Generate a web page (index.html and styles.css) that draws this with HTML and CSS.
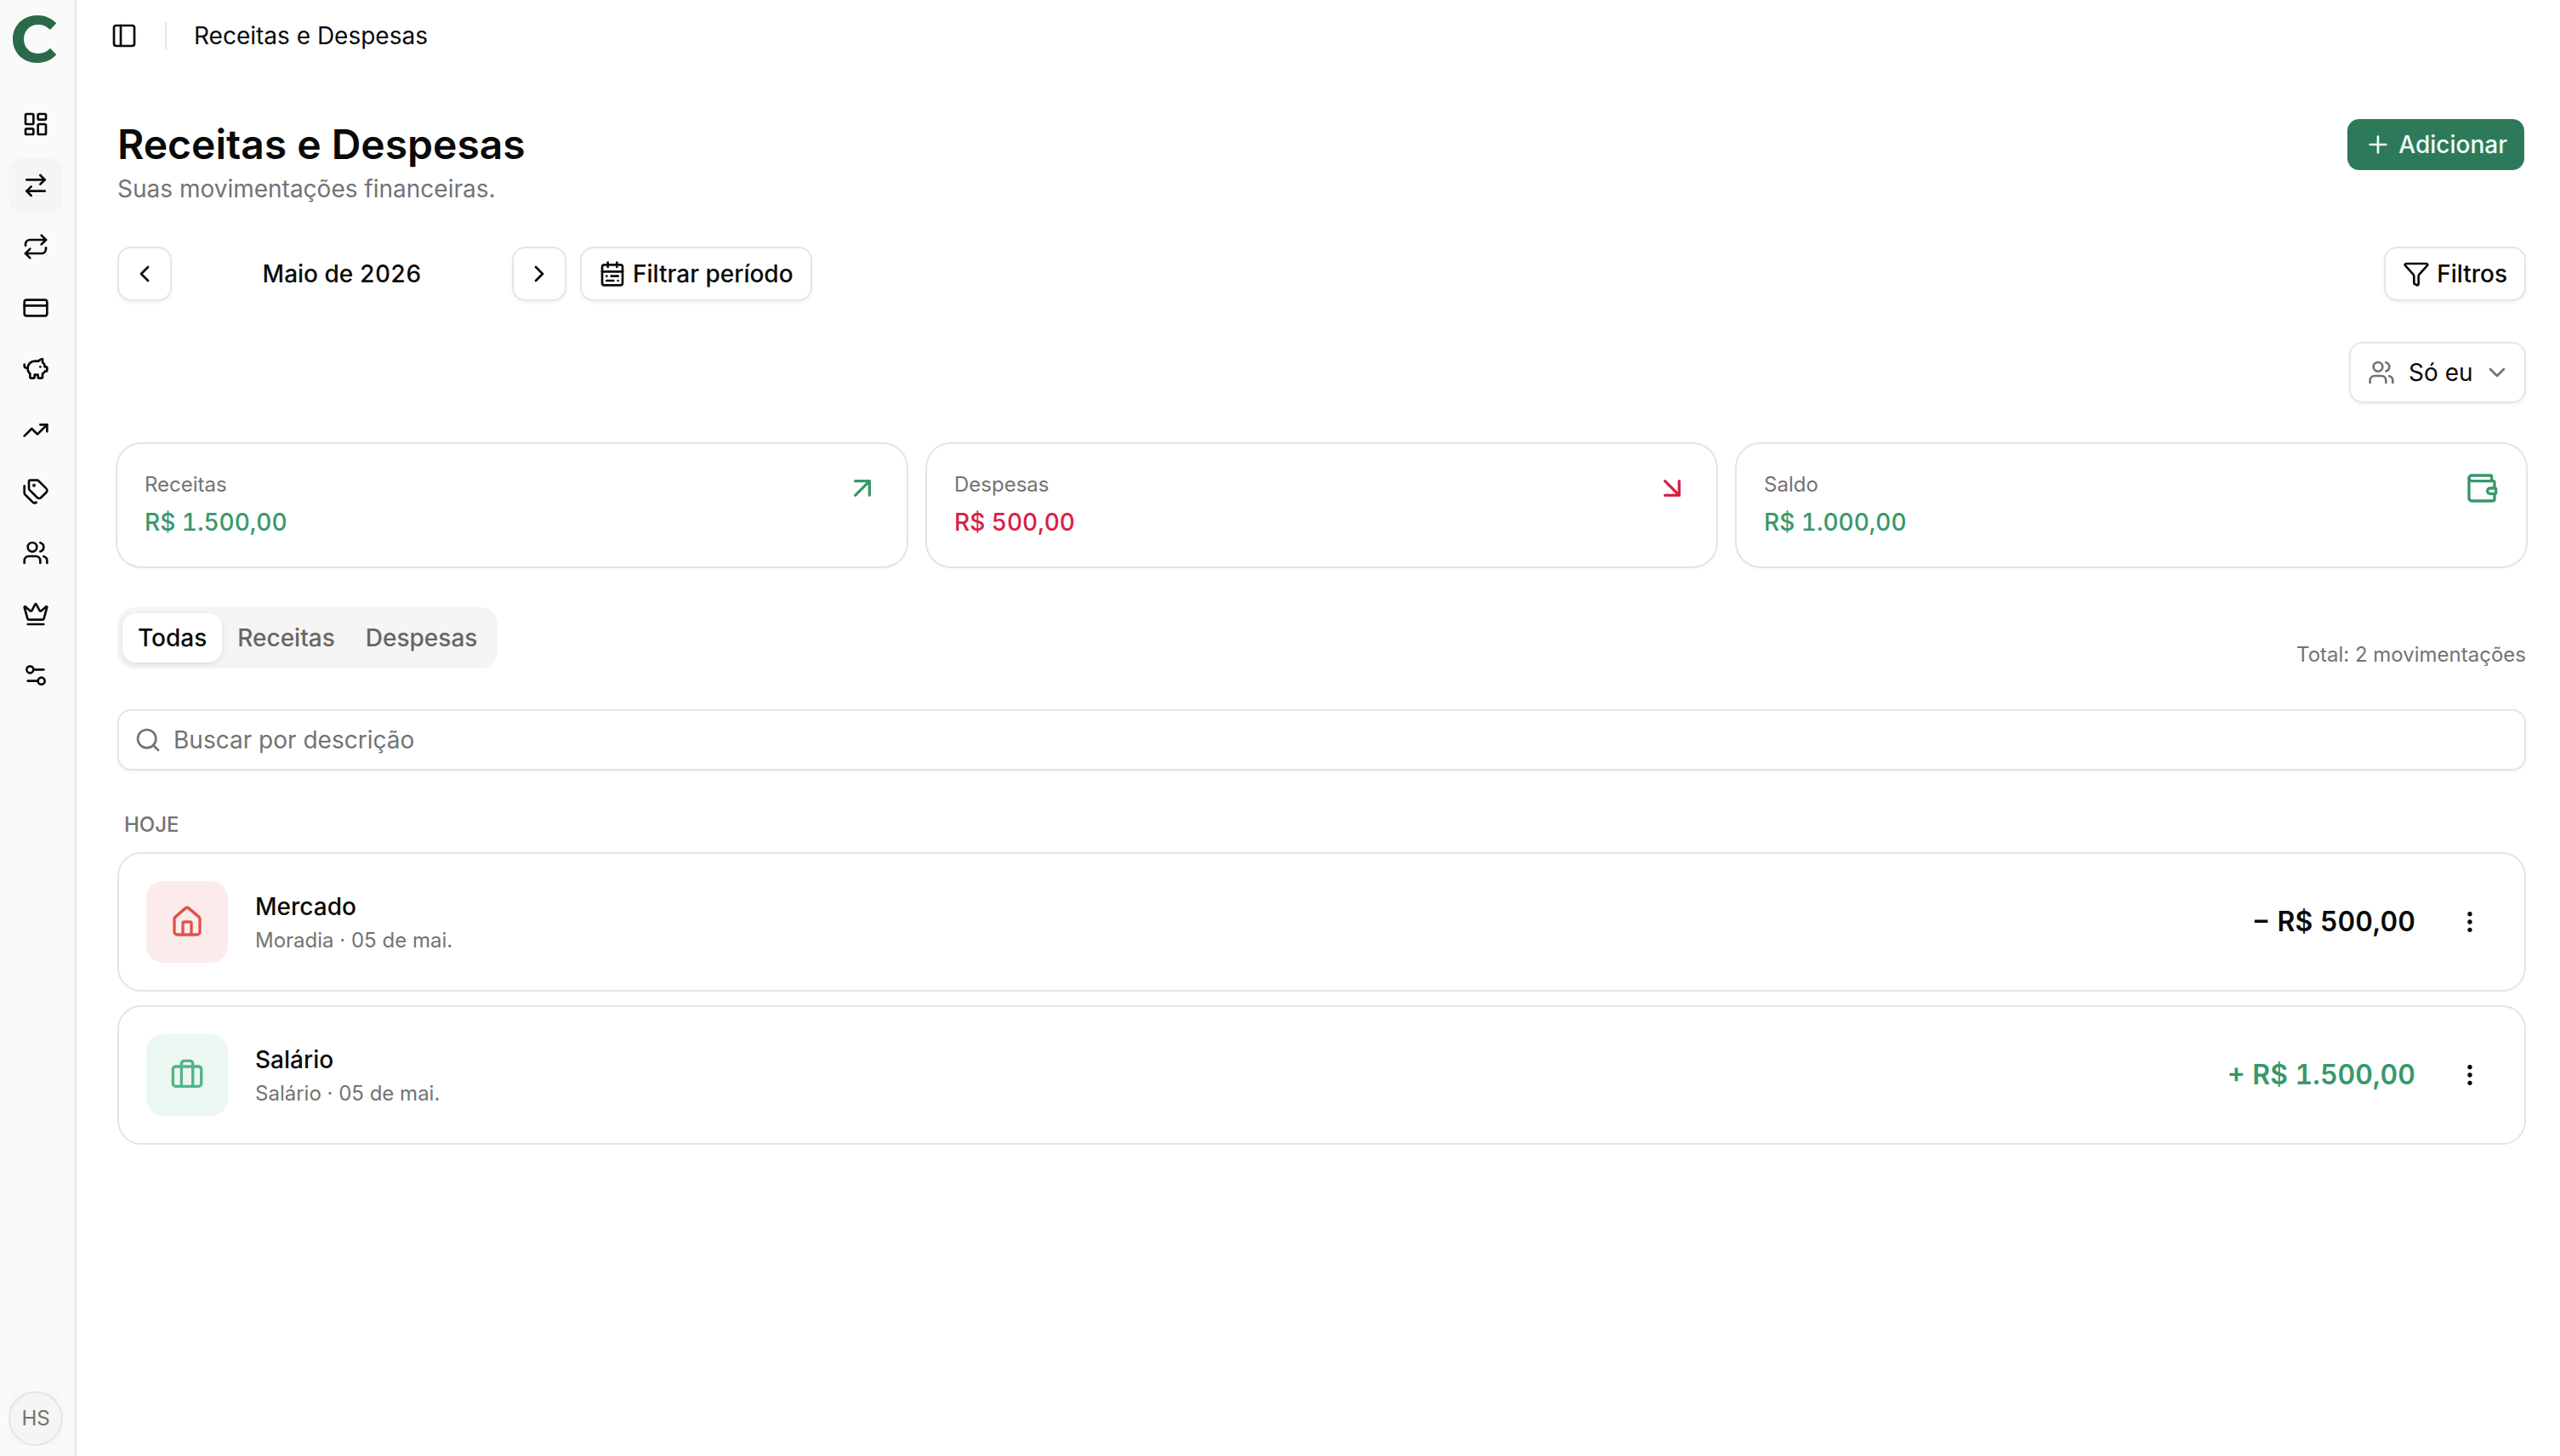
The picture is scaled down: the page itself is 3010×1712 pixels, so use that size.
FILE: index.html
```html
<!DOCTYPE html>
<html lang="pt-BR">
<head>
    <meta charset="UTF-8">
    <meta name="viewport" content="width=device-width, initial-scale=1.0">
    <title>Receitas e Despesas</title>
    <link rel="stylesheet" href="styles.css">
</head>
<body>
    <div class="app">
        <aside class="sidebar">
            <a href="#" class="logo" aria-label="Início">
                <svg viewBox="0 0 54 56"><path d="M52.3 9.3C46.5 3.3 38.6 0 30 0 13.2 0 1 12.2 1 28s12.2 28 29 28c8.6 0 16.5-3.3 22.3-9.7L45 38.7c-4 4.2-8.6 6.2-14.5 6.2C21 44.9 14 37.8 14 28s7-17.1 16.5-17.1c5.9 0 10.5 1.9 14.5 6.1z"/></svg>
            </a>
            <nav class="nav">
                <a href="#" class="nav-item" aria-label="Painel">
                    <svg class="icon" viewBox="0 0 24 24"><rect width="7" height="9" x="3" y="3" rx="1"/><rect width="7" height="5" x="14" y="3" rx="1"/><rect width="7" height="9" x="14" y="12" rx="1"/><rect width="7" height="5" x="3" y="16" rx="1"/></svg>
                </a>
                <a href="#" class="nav-item active" aria-label="Receitas e Despesas">
                    <svg class="icon" viewBox="0 0 24 24"><path d="m16 3 4 4-4 4"/><path d="M20 7H4"/><path d="m8 21-4-4 4-4"/><path d="M4 17h16"/></svg>
                </a>
                <a href="#" class="nav-item" aria-label="Recorrentes">
                    <svg class="icon" viewBox="0 0 24 24"><path d="m17 2 4 4-4 4"/><path d="M3 11v-1a4 4 0 0 1 4-4h14"/><path d="m7 22-4-4 4-4"/><path d="M21 13v1a4 4 0 0 1-4 4H3"/></svg>
                </a>
                <a href="#" class="nav-item" aria-label="Cartões">
                    <svg class="icon" viewBox="0 0 24 24"><rect width="20" height="14" x="2" y="5" rx="2"/><path d="M2 10h20"/></svg>
                </a>
                <a href="#" class="nav-item" aria-label="Cofrinhos">
                    <svg class="icon" viewBox="0 0 24 24"><path d="M11 17h3v2a1 1 0 0 0 1 1h2a1 1 0 0 0 1-1v-3a3.16 3.16 0 0 0 2-2h1a1 1 0 0 0 1-1v-2a1 1 0 0 0-1-1h-1a5 5 0 0 0-2-4V3a4 4 0 0 0-3.2 1.6l-.3.4H11a6 6 0 0 0-6 6v1a5 5 0 0 0 2 4v3a1 1 0 0 0 1 1h2a1 1 0 0 0 1-1z"/><path d="M16 10h.01"/><path d="M2 8v1a2 2 0 0 0 2 2h1"/></svg>
                </a>
                <a href="#" class="nav-item" aria-label="Investimentos">
                    <svg class="icon" viewBox="0 0 24 24"><path d="M16 7h6v6"/><path d="m22 7-8.5 8.5-5-5L2 17"/></svg>
                </a>
                <a href="#" class="nav-item" aria-label="Categorias">
                    <svg class="icon" viewBox="0 0 24 24"><path d="M13.172 2a2 2 0 0 1 1.414.586l6.71 6.71a2.4 2.4 0 0 1 0 3.408l-4.592 4.592a2.4 2.4 0 0 1-3.408 0l-6.71-6.71A2 2 0 0 1 6 9.172V3a1 1 0 0 1 1-1z"/><path d="M2 7v6.172a2 2 0 0 0 .586 1.414l6.71 6.71a2.4 2.4 0 0 0 3.191.193"/><circle cx="10.5" cy="6.5" r=".5" fill="currentColor"/></svg>
                </a>
                <a href="#" class="nav-item" aria-label="Grupo">
                    <svg class="icon" viewBox="0 0 24 24"><path d="M16 21v-2a4 4 0 0 0-4-4H6a4 4 0 0 0-4 4v2"/><path d="M16 3.128a4 4 0 0 1 0 7.744"/><path d="M22 21v-2a4 4 0 0 0-3-3.87"/><circle cx="9" cy="7" r="4"/></svg>
                </a>
                <a href="#" class="nav-item" aria-label="Assinatura">
                    <svg class="icon" viewBox="0 0 24 24"><path d="M11.562 3.266a.5.5 0 0 1 .876 0L15.39 8.87a1 1 0 0 0 1.516.294L21.183 5.5a.5.5 0 0 1 .798.519l-2.834 10.246a1 1 0 0 1-.956.734H5.81a1 1 0 0 1-.957-.734L2.02 6.02a.5.5 0 0 1 .798-.519l4.276 3.664a1 1 0 0 0 1.516-.294z"/><path d="M5 21h14"/></svg>
                </a>
                <a href="#" class="nav-item" aria-label="Configurações">
                    <svg class="icon" viewBox="0 0 24 24"><path d="M14 17H5"/><path d="M19 7h-9"/><circle cx="17" cy="17" r="3"/><circle cx="7" cy="7" r="3"/></svg>
                </a>
            </nav>
            <button type="button" class="user" aria-label="Conta"><span class="avatar">HS</span></button>
        </aside>

        <div class="page">
            <header class="topbar">
                <button type="button" class="toggle" aria-label="Alternar menu">
                    <svg class="icon" viewBox="0 0 24 24"><rect width="18" height="18" x="3" y="3" rx="2"/><path d="M9 3v18"/></svg>
                </button>
                <span class="divider"></span>
                <span class="crumb">Receitas e Despesas</span>
            </header>

            <main class="content">
                <div class="row heading">
                    <div>
                        <h1>Receitas e Despesas</h1>
                        <p class="subtitle">Suas movimentações financeiras.</p>
                    </div>
                    <button type="button" class="btn primary">
                        <svg class="icon" viewBox="0 0 24 24"><path d="M5 12h14"/><path d="M12 5v14"/></svg>
                        Adicionar
                    </button>
                </div>

                <div class="row">
                    <div class="period">
                        <button type="button" class="btn square" aria-label="Mês anterior">
                            <svg class="icon" viewBox="0 0 24 24"><path d="m15 18-6-6 6-6"/></svg>
                        </button>
                        <span class="month">Maio de 2026</span>
                        <button type="button" class="btn square" aria-label="Próximo mês">
                            <svg class="icon" viewBox="0 0 24 24"><path d="m9 18 6-6-6-6"/></svg>
                        </button>
                        <button type="button" class="btn">
                            <svg class="icon" viewBox="0 0 24 24"><rect width="18" height="18" x="3" y="4" rx="2"/><path d="M16 2v4"/><path d="M3 10h18"/><path d="M8 2v4"/><path d="M17 14h-6"/><path d="M13 18H7"/><path d="M7 14h.01"/><path d="M17 18h.01"/></svg>
                            Filtrar período
                        </button>
                    </div>
                    <button type="button" class="btn">
                        <svg class="icon" viewBox="0 0 24 24"><path d="M10 20a1 1 0 0 0 .553.895l2 1A1 1 0 0 0 14 21v-7a2 2 0 0 1 .517-1.341L21.74 4.67A1 1 0 0 0 21 3H3a1 1 0 0 0-.742 1.67l7.225 7.989A2 2 0 0 1 10 14z"/></svg>
                        Filtros
                    </button>
                </div>

                <div class="scope">
                    <label class="select-box">
                        <svg class="icon" viewBox="0 0 24 24"><path d="M16 21v-2a4 4 0 0 0-4-4H6a4 4 0 0 0-4 4v2"/><path d="M16 3.128a4 4 0 0 1 0 7.744"/><path d="M22 21v-2a4 4 0 0 0-3-3.87"/><circle cx="9" cy="7" r="4"/></svg>
                        <select aria-label="Visualização">
                            <option>Só eu</option>
                        </select>
                        <svg class="icon" viewBox="0 0 24 24"><path d="m6 9 6 6 6-6"/></svg>
                    </label>
                </div>

                <section class="stats">
                    <div class="stat-card">
                        <div>
                            <p class="stat-label">Receitas</p>
                            <p class="stat-value income">R$ 1.500,00</p>
                        </div>
                        <svg class="icon large income" viewBox="0 0 24 24"><path d="M7 7h10v10"/><path d="M7 17 17 7"/></svg>
                    </div>
                    <div class="stat-card">
                        <div>
                            <p class="stat-label">Despesas</p>
                            <p class="stat-value expense">R$ 500,00</p>
                        </div>
                        <svg class="icon large expense" viewBox="0 0 24 24"><path d="m7 7 10 10"/><path d="M17 7v10H7"/></svg>
                    </div>
                    <div class="stat-card">
                        <div>
                            <p class="stat-label">Saldo</p>
                            <p class="stat-value income">R$ 1.000,00</p>
                        </div>
                        <svg class="icon large income" viewBox="0 0 24 24"><path d="M19 7V4a1 1 0 0 0-1-1H5a2 2 0 0 0 0 4h15a1 1 0 0 1 1 1v4h-3a2 2 0 0 0 0 4h3a1 1 0 0 0 1-1v-2a1 1 0 0 0-1-1"/><path d="M3 5v14a2 2 0 0 0 2 2h15a1 1 0 0 0 1-1v-4"/></svg>
                    </div>
                </section>

                <div class="row list-head">
                    <div class="tabs" role="tablist">
                        <button type="button" class="tab active" role="tab" aria-selected="true">Todas</button>
                        <button type="button" class="tab" role="tab" aria-selected="false">Receitas</button>
                        <button type="button" class="tab" role="tab" aria-selected="false">Despesas</button>
                    </div>
                    <p class="total">Total: 2 movimentações</p>
                </div>

                <label class="search">
                    <svg class="icon" viewBox="0 0 24 24"><path d="m21 21-4.34-4.34"/><circle cx="11" cy="11" r="8"/></svg>
                    <input type="search" placeholder="Buscar por descrição" aria-label="Buscar por descrição">
                </label>

                <section class="day">
                    <h2>HOJE</h2>
                    <article class="entry">
                        <span class="tile red">
                            <svg class="icon large" viewBox="0 0 24 24"><path d="M15 21v-8a1 1 0 0 0-1-1h-4a1 1 0 0 0-1 1v8"/><path d="M3 10a2 2 0 0 1 .709-1.528l7-6a2 2 0 0 1 2.582 0l7 6A2 2 0 0 1 21 10v9a2 2 0 0 1-2 2H5a2 2 0 0 1-2-2z"/></svg>
                        </span>
                        <div class="entry-info">
                            <h3>Mercado</h3>
                            <p>Moradia · 05 de mai.</p>
                        </div>
                        <span class="amount">− R$ 500,00</span>
                        <button type="button" class="more" aria-label="Mais ações">
                            <svg class="icon" viewBox="0 0 24 24"><circle cx="12" cy="12" r="1"/><circle cx="12" cy="5" r="1"/><circle cx="12" cy="19" r="1"/></svg>
                        </button>
                    </article>
                    <article class="entry">
                        <span class="tile green">
                            <svg class="icon large" viewBox="0 0 24 24"><path d="M16 20V4a2 2 0 0 0-2-2h-4a2 2 0 0 0-2 2v16"/><rect width="20" height="14" x="2" y="6" rx="2"/></svg>
                        </span>
                        <div class="entry-info">
                            <h3>Salário</h3>
                            <p>Salário · 05 de mai.</p>
                        </div>
                        <span class="amount income">+ R$ 1.500,00</span>
                        <button type="button" class="more" aria-label="Mais ações">
                            <svg class="icon" viewBox="0 0 24 24"><circle cx="12" cy="12" r="1"/><circle cx="12" cy="5" r="1"/><circle cx="12" cy="19" r="1"/></svg>
                        </button>
                    </article>
                </section>
            </main>
        </div>
    </div>
</body>
</html>
```
FILE: styles.css
```css
* { box-sizing: border-box; }
body {
    margin: 0;
    font-family: Inter, 'Noto Sans', sans-serif;
    font-size: 28px;
    line-height: 40px;
    color: #0a0a0a;
    background: #fff;
}
h1, h2, h3, p { margin: 0; }
button, input, select {
    font: inherit;
    color: inherit;
    margin: 0;
    padding: 0;
    border: 0;
    background: none;
}
a { color: inherit; text-decoration: none; }

.icon {
    width: 32px;
    height: 32px;
    flex-shrink: 0;
    fill: none;
    stroke: currentColor;
    stroke-width: 2;
    stroke-linecap: round;
    stroke-linejoin: round;
}
.icon.large { width: 40px; height: 40px; }
.income { color: #38986a; }
.expense { color: #d82045; }

.app { display: flex; min-height: 100vh; }

/* sidebar */
.sidebar {
    width: 90px;
    flex-shrink: 0;
    display: flex;
    flex-direction: column;
    padding: 16px 14px 12px 10px;
    background: #fafafa;
    border-right: 2px solid #e5e5e5;
}
.logo { display: block; height: 98px; padding: 2px 4px; }
.logo svg { display: block; width: 54px; height: 56px; fill: #2a6a49; }
.nav { display: flex; flex-direction: column; gap: 8px; flex: 1; }
.nav-item {
    display: flex;
    align-items: center;
    justify-content: center;
    width: 64px;
    height: 64px;
    border-radius: 16px;
}
.nav-item.active { background: #f5f5f5; }
.user { width: 64px; height: 64px; border-radius: 16px; background: #f7f7f7; }
.avatar {
    display: flex;
    align-items: center;
    justify-content: center;
    width: 64px;
    height: 64px;
    border: 2px solid #e5e5e5;
    border-radius: 50%;
    background: #f5f5f5;
    font-size: 24px;
    color: #737373;
}

/* page */
.page { flex: 1; min-width: 0; }
.topbar { display: flex; align-items: center; height: 84px; padding: 0 48px 0 40px; }
.toggle { display: flex; }
.divider { width: 2px; height: 32px; margin: 0 32px; background: #e5e5e5; }
.content { display: flex; flex-direction: column; gap: 48px; padding: 54px 40px 48px 48px; }
.row { display: flex; justify-content: space-between; align-items: flex-start; }

h1 { font-size: 48px; font-weight: 600; line-height: 64px; }
.subtitle { color: #737373; }

.btn {
    display: inline-flex;
    align-items: center;
    justify-content: center;
    gap: 8px;
    height: 64px;
    padding: 0 20px;
    border: 2px solid #e5e5e5;
    border-radius: 16px;
    background: #fff;
    font-weight: 500;
    box-shadow: 0 2px 4px rgba(0, 0, 0, 0.05);
}
.btn.square { width: 64px; padding: 0; }
.btn.primary {
    border-color: transparent;
    background: #2d7a5b;
    background-clip: padding-box;
    color: #f0fdf4;
    box-shadow: none;
}
.period { display: flex; align-items: center; gap: 16px; }
.month {
    width: 368px;
    text-align: center;
    font-weight: 500;
    font-variant-numeric: tabular-nums;
}

.scope { display: flex; justify-content: flex-end; }
.select-box {
    display: flex;
    align-items: center;
    height: 72px;
    padding: 0 16px 0 20px;
    border: 2px solid #e5e5e5;
    border-radius: 16px;
    color: #737373;
    box-shadow: 0 2px 4px rgba(0, 0, 0, 0.05);
}
.select-box select { appearance: none; margin: 0 12px 0 16px; color: #0a0a0a; }

/* totals */
.stats { display: grid; grid-template-columns: repeat(3, 1fr); gap: 24px; }
.stat-card {
    display: flex;
    justify-content: space-between;
    align-items: flex-start;
    padding: 32px;
    border-radius: 28px;
    box-shadow: 0 0 0 2px #e5e5e5, 0 2px 4px rgba(0, 0, 0, 0.05);
}
.stat-label { margin-bottom: 8px; font-size: 24px; line-height: 32px; color: #737373; }
.stat-value { font-weight: 500; font-variant-numeric: tabular-nums; }

/* list */
.list-head { align-items: flex-end; }
.tabs { display: flex; padding: 7px 6px; border-radius: 20px; background: #f5f5f5; }
.tab { height: 58px; padding: 0 18px; border-radius: 16px; font-weight: 500; color: #666; }
.tab.active { background: #fff; color: #0a0a0a; box-shadow: 0 2px 6px rgba(0, 0, 0, 0.1); }
.total { font-size: 24px; line-height: 32px; color: #737373; }

.search {
    display: flex;
    align-items: center;
    gap: 14px;
    height: 72px;
    padding: 0 18px;
    border: 2px solid #e5e5e5;
    border-radius: 16px;
    color: #737373;
    box-shadow: 0 2px 4px rgba(0, 0, 0, 0.05);
}
.search input { flex: 1; height: 100%; outline: none; color: #0a0a0a; }
.search input::placeholder { color: #737373; }

.day { display: flex; flex-direction: column; gap: 16px; }
.day h2 {
    padding: 0 8px;
    font-size: 24px;
    font-weight: 500;
    line-height: 32px;
    color: #737373;
}
.entry {
    display: flex;
    align-items: center;
    gap: 32px;
    padding: 32px;
    border: 2px solid #e5e5e5;
    border-radius: 28px;
}
.tile {
    display: flex;
    align-items: center;
    justify-content: center;
    width: 96px;
    height: 96px;
    border-radius: 20px;
}
.tile.red { background: #fbeceb; color: #e0524c; }
.tile.green { background: #ecf7f1; color: #51b583; }
.entry-info { display: flex; flex-direction: column; gap: 4px; flex: 1; }
.entry-info h3 { font-size: 28px; font-weight: 500; line-height: 40px; }
.entry-info p { font-size: 24px; line-height: 32px; color: #737373; }
.amount { font-size: 32px; font-weight: 600; font-variant-numeric: tabular-nums; }
.more {
    display: flex;
    align-items: center;
    justify-content: center;
    width: 64px;
    height: 64px;
}
```
